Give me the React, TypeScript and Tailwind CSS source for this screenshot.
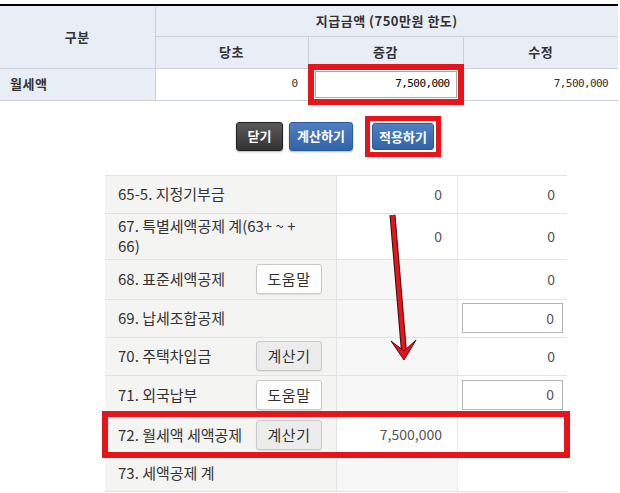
import React from "react"

const ko = "font-['Noto_Sans_CJK_KR',sans-serif]"
const mono = "font-['DejaVu_Sans_Mono',monospace] text-[11px] tracking-[-0.6px]"

type Row = {
  label: React.ReactNode
  h: string
  button?: "help" | "calc"
  mid?: string
  midBg: string
  right?: string
  rightInput?: boolean
}

const rows: Row[] = [
  { label: "65-5. 지정기부금", h: "h-[38px]", mid: "0", midBg: "bg-white", right: "0" },
  {
    label: (
      <>
        67. 특별세액공제 계(63+ ~ +
        <br />
        66)
      </>
    ),
    h: "h-[46px]",
    mid: "0",
    midBg: "bg-white",
    right: "0",
  },
  { label: "68. 표준세액공제", h: "h-[40px]", button: "help", midBg: "bg-[#f7f7f7]", right: "0" },
  { label: "69. 납세조합공제", h: "h-[38px]", midBg: "bg-[#f7f7f7]", right: "0", rightInput: true },
  { label: "70. 주택차입금", h: "h-[38px]", button: "calc", midBg: "bg-[#f7f7f7]", right: "0" },
  { label: "71. 외국납부", h: "h-[39px]", button: "help", midBg: "bg-[#f7f7f7]", right: "0", rightInput: true },
  { label: "72. 월세액 세액공제", h: "h-[41px]", button: "calc", mid: "7,500,000", midBg: "bg-white" },
  { label: "73. 세액공제 계", h: "h-[36px]", midBg: "bg-[#f7f7f7]" },
]

function SmallButton({ kind }: { kind: "help" | "calc" }) {
  return (
    <button
      type="button"
      className={[
        "flex h-[30px] w-[66px] shrink-0 items-center justify-center rounded-[3px] border border-[#c9c9c9] text-[15px] tracking-[0.5px] text-[#333] shadow-[0_1px_1px_rgba(0,0,0,0.08)]",
        kind === "calc" ? "bg-[#ececec]" : "bg-white",
      ].join(" ")}
    >
      {kind === "calc" ? "계산기" : "도움말"}
    </button>
  )
}

export default function App() {
  return (
    <div className={`relative h-[493px] w-[620px] overflow-hidden bg-white ${ko}`}>
      {/* top summary table */}
      <div className="pt-[4px]">
        <table className="w-[618px] table-fixed border-collapse border-t-2 border-t-black text-[13px] tracking-[0.5px] text-[#333]">
          <colgroup>
            <col className="w-[155px]" />
            <col className="w-[153px]" />
            <col className="w-[155px]" />
            <col className="w-[155px]" />
          </colgroup>
          <tbody>
            <tr className="h-[31px]">
              <th rowSpan={2} className="border border-t-0 border-l-0 border-[#cbd1dc] bg-[#e9edf6] font-bold">
                구분
              </th>
              <th colSpan={3} className="border border-t-0 border-r-0 border-[#cbd1dc] bg-[#e9edf6] font-bold">
                지급금액 (750만원 한도)
              </th>
            </tr>
            <tr className="h-[32px]">
              <th className="border border-[#cbd1dc] bg-[#e9edf6] font-bold">당초</th>
              <th className="border border-[#cbd1dc] bg-[#e9edf6] font-bold">증감</th>
              <th className="border border-r-0 border-[#cbd1dc] bg-[#e9edf6] font-bold">수정</th>
            </tr>
            <tr className="h-[32px]">
              <td className="border border-l-0 border-[#cbd1dc] bg-[#e9edf6] pl-[10px] font-bold">월세액</td>
              <td className={`border border-[#cbd1dc] pr-[10px] text-right ${mono}`}>0</td>
              <td className="border border-[#cbd1dc] px-[6px]">
                <div className="relative">
                  <div className={`flex h-[27px] items-center justify-end border border-[#a9a9a9] bg-white pr-[6px] text-black ${mono}`}>
                    7,500,000
                  </div>
                  {/* highlight */}
                  <div className="pointer-events-none absolute -inset-[7px] border-[6px] border-[#e8141c]" />
                </div>
              </td>
              <td className={`border border-r-0 border-[#cbd1dc] pr-[10px] text-right ${mono}`}>7,500,000</td>
            </tr>
          </tbody>
        </table>
      </div>

      {/* action buttons */}
      <div className="mt-[15px] flex items-center pl-[236px]">
        <button
          type="button"
          className="h-[29px] w-[47px] rounded-[3px] border border-[#222] bg-[linear-gradient(#5a5a5a,#333)] text-[13px] font-bold text-white shadow-[0_1px_2px_rgba(0,0,0,0.3)]"
        >
          닫기
        </button>
        <button
          type="button"
          className="ml-[6px] h-[29px] w-[64px] rounded-[3px] border border-[#2c5a96] bg-[linear-gradient(#4f80c4,#3263a6)] text-[13px] font-bold text-white shadow-[0_1px_2px_rgba(0,0,0,0.3)]"
        >
          계산하기
        </button>
        <div className="ml-[12px] border-[5px] border-[#e8141c] p-[2px]">
          <button
            type="button"
            className="h-[27px] w-[62px] rounded-[3px] border border-[#2c5a96] bg-[linear-gradient(#4f80c4,#3263a6)] text-[13px] font-bold text-white"
          >
            적용하기
          </button>
        </div>
      </div>

      {/* deduction table */}
      <div className="mt-[18px] ml-[105px] w-[462px] border-t border-[#e2e2e2] text-[15px] text-[#333]">
        {rows.map((r, i) => (
          <div key={i} className={`grid grid-cols-[232px_121px_109px] border-b border-[#e2e2e2] ${r.h}`}>
            <div className="flex items-center justify-between border-r border-[#e2e2e2] bg-[#f4f4f2] pl-[13px] pr-[14px] leading-[20px]">
              <span>{r.label}</span>
              {r.button && <SmallButton kind={r.button} />}
            </div>
            <div className={`flex items-center justify-end border-r border-[#e8e8e8] pr-[15px] text-[14px] text-[#555] ${r.midBg}`}>
              {r.mid}
            </div>
            <div className="flex items-center justify-end bg-white text-[14px] text-[#555]">
              {r.rightInput ? (
                <div className="mx-[4px] flex h-[30px] w-full items-center justify-end border border-[#b4b4b4] pr-[8px]">
                  {r.right}
                </div>
              ) : (
                <span className="pr-[12px]">{r.right}</span>
              )}
            </div>
          </div>
        ))}
      </div>

      {/* row highlight */}
      <div className="pointer-events-none absolute left-[102px] top-[411px] h-[47px] w-[468px] border-[6px] border-[#e8141c]" />

      {/* arrow */}
      <svg className="pointer-events-none absolute left-0 top-0" width="620" height="493" viewBox="0 0 620 493">
        <line x1="392.5" y1="215" x2="404" y2="352" stroke="#3a0a0a" strokeWidth="6" />
        <line x1="392.5" y1="215" x2="404" y2="352" stroke="#e8141c" strokeWidth="4" />
        <polygon points="391,341 404,360 416,340 404,351" fill="#e8141c" stroke="#5a0a0a" strokeWidth="1" />
      </svg>
    </div>
  )
}
